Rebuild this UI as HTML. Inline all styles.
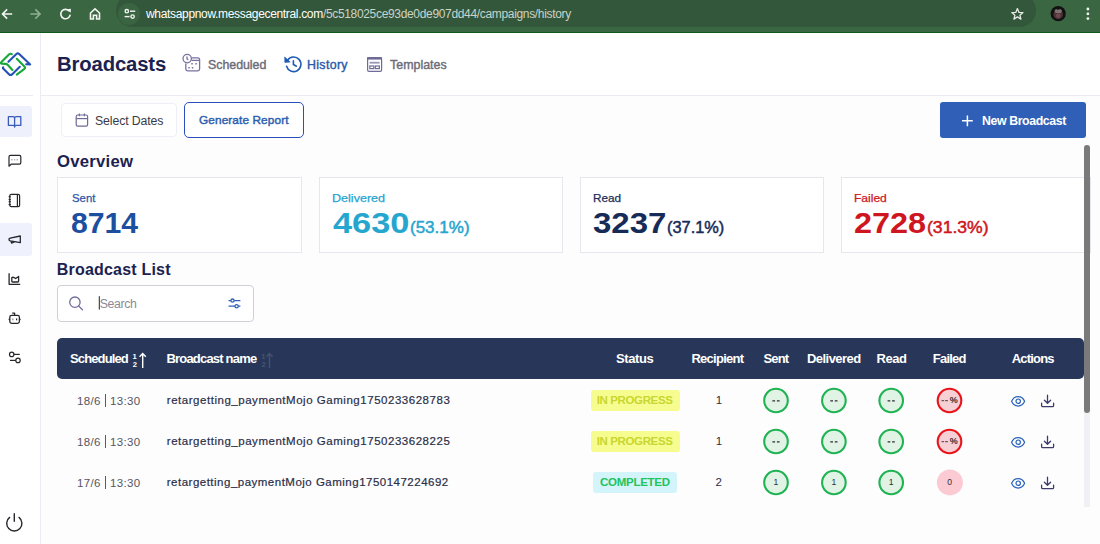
<!DOCTYPE html>
<html><head><meta charset="utf-8">
<style>
*{box-sizing:border-box;margin:0;padding:0}
html,body{width:1100px;height:544px;overflow:hidden;background:#fdfdfe;font-family:"Liberation Sans",sans-serif}
.abs{position:absolute}
svg{position:absolute;overflow:visible}
#bar{position:absolute;left:0;top:0;width:1100px;height:33px;background:#3b6642;border-bottom:1px solid #0d5a1c}
#pill{position:absolute;left:116px;top:-6px;width:920px;height:33px;background:#33573a;border-radius:17px}
#url b{font-weight:normal;color:#fff}
#side{position:absolute;left:0;top:33px;width:41px;height:511px;border-right:1px solid #ecebf2;background:#fff}
#hdr{position:absolute;left:41px;top:33px;width:1059px;height:63px;border-bottom:1px solid #ecebf2;background:#fff}
.t{position:absolute;white-space:nowrap;line-height:1}
.card{position:absolute;top:177px;height:76px;border:1px solid #e6e6ec;background:#fff}
#thead{position:absolute;left:57px;top:338px;width:1027px;height:41px;background:#283759;border-radius:5px}
.badge{position:absolute;height:21px;border-radius:3px}
.circ{position:absolute;width:25.5px;height:25.5px;border-radius:50%;border:1.8px solid #1fb353;background:#e1f3e5;font-size:8px;text-align:center;line-height:21.9px;color:#333;font-weight:bold}
.circ.r{border-color:#e8141a;background:#f7d0d5}
.circ.nb{border-color:#f9cdd3;background:#f9cdd3}
.prog{background:#f6fd8e}
.done{background:#d3f4fb}
</style></head><body>
<div id="bar"><div id="pill"></div><div class="abs" style="left:118px;top:3px;width:22px;height:22px;border-radius:50%;background:#3a6442"></div></div>
<svg width="1100" height="33" style="left:0;top:0">
  <g fill="none" stroke="#f2f5f2" stroke-width="1.6" stroke-linecap="square">
    <path d="M2.8 14H11.4M6.6 9.9L2.5 14L6.6 18.1"/>
  </g>
  <g fill="none" stroke="#8daf93" stroke-width="1.6" stroke-linecap="square">
    <path d="M31.2 14H40M35.9 9.9L40 14L35.9 18.1"/>
  </g>
  <g fill="none" stroke="#f2f5f2" stroke-width="1.6">
    <path d="M69.4 11.4A4.7 4.7 0 1 0 70.2 14.6"/>
  </g>
  <path d="M67 9.2L70.9 8.8L70.7 12.7Z" fill="#f2f5f2"/>
  <g fill="none" stroke="#f2f5f2" stroke-width="1.6" stroke-linejoin="miter">
    <path d="M90.5 19V13L95 8.8L99.5 13V19H96.6V15.3H93.4V19Z"/>
  </g>
  <!-- tune -->
  <g fill="none" stroke="#f2f5f2" stroke-width="1.4">
    <circle cx="126.8" cy="11.2" r="1.7"/>
    <path d="M130 11.2H135.2"/>
    <circle cx="132.6" cy="16.6" r="1.7"/>
    <path d="M124.6 16.6H129.6"/>
  </g>
  <!-- star -->
  <path d="M1017.4 8.6L1019 12.4L1023 12.6L1019.9 15.2L1020.9 19.1L1017.4 16.9L1013.9 19.1L1014.9 15.2L1011.8 12.6L1015.8 12.4Z" fill="none" stroke="#e6ebe6" stroke-width="1.3" stroke-linejoin="round"/>
  <!-- avatar -->
  <circle cx="1058.2" cy="13.7" r="7.6" fill="#111"/>
  <circle cx="1058.2" cy="14.4" r="4.8" fill="#4a3438"/>
  <path d="M1054.5 10.5L1056 9L1058 10L1060.3 9L1062 10.5L1061 13L1055.5 13Z" fill="#7e7274"/>
  <circle cx="1058.2" cy="15.8" r="2.2" fill="#6e4a50"/>
  <!-- menu -->
  <g fill="#f4f6f4"><circle cx="1087.9" cy="9" r="1.4"/><circle cx="1087.9" cy="13.8" r="1.4"/><circle cx="1087.9" cy="18.6" r="1.4"/></g>
</svg>
<div id="side"></div>
<div class="abs" style="left:0;top:95px;width:33px;height:1px;background:#ecebf2"></div>
<div class="abs" style="left:0;top:106px;width:31.5px;height:31px;background:#eef1fc;border-radius:0 3px 3px 0"></div>
<div class="abs" style="left:0;top:223px;width:31.7px;height:32.5px;background:#eff2fd;border-radius:0 3px 3px 0"></div>
<svg width="41" height="544" style="left:0;top:0">
  <!-- logo -->
  <g fill="none" stroke-width="2.1" stroke-linecap="round" stroke-linejoin="round">
    <path d="M11.8 54.2Q10.4 53.2 9.2 54.3L1.2 62.3Q0.4 63.4 1.8 63.7L5.6 63.9Q6.8 64 7.6 64.8L12.4 70" stroke="#1aa83a"/>
    <path d="M8.4 61.8L16.4 54Q17.8 52.8 19.2 54L30.2 64.4L26.2 64.2" stroke="#2351b5"/>
    <path d="M16.8 58.8L24.4 66.4Q25.6 67.6 24.4 68.8L16.8 74.6" stroke="#1aa83a"/>
    <path d="M19.8 66.8L12 74.4Q10.6 75.6 9.2 74.4L3.2 68.6Q2.6 67.8 3.2 67.4" stroke="#2351b5"/>
  </g>
  <!-- book -->
  <g fill="none" stroke="#3a5bb8" stroke-width="1.3" stroke-linejoin="round">
    <path d="M8.4 116.6H12.8Q14.6 116.6 14.6 118.2Q14.6 116.6 16.4 116.6H20.8V125.4H15.8Q14.6 125.4 14.6 127Q14.6 125.4 13.4 125.4H8.4Z"/>
    <path d="M14.6 118.2V126.6"/>
  </g>
  <!-- chat -->
  <g fill="none" stroke="#26262c" stroke-width="1.2" stroke-linejoin="round">
    <path d="M9 166.2V156.8Q9 155.4 10.4 155.4H19.4Q20.8 155.4 20.8 156.8V162.8Q20.8 164.2 19.4 164.2H11.2Z"/>
  </g>
  <g fill="#9a9aa2"><rect x="11.2" y="159.2" width="1.3" height="1.2"/><rect x="13.9" y="159.2" width="1.3" height="1.2"/><rect x="16.6" y="159.2" width="1.3" height="1.2"/></g>
  <!-- notebook -->
  <g fill="none" stroke="#26262c" stroke-width="1.2">
    <rect x="9.8" y="194.4" width="9.8" height="12.2" rx="1.4"/>
    <path d="M17.4 194.4V206.6"/>
  </g>
  <g fill="#26262c"><rect x="8.6" y="196.2" width="2.2" height="1.1"/><rect x="8.6" y="199" width="2.2" height="1.1"/><rect x="8.6" y="201.2" width="2.2" height="1.1"/><rect x="8.6" y="204" width="2.2" height="1.1"/></g>
  <!-- megaphone -->
  <g fill="none" stroke="#26262c" stroke-width="1.3" stroke-linejoin="round">
    <path d="M9 238.8Q8.6 240.4 10.2 240.9L20.3 242.6V236L10.2 238.2Z"/>
    <path d="M11 241.2L11.6 243.1L14.4 242"/>
  </g>
  <!-- chart -->
  <g fill="none" stroke="#26262c" stroke-width="1.3" stroke-linejoin="round">
    <path d="M9.1 273.3V284.3H20.2"/>
    <path d="M11.8 277.6Q13.5 276.6 15.6 278.6L18.6 276.4V281.2Q18.6 282 17.8 282H12.6Q11.8 282 11.8 281.2Z"/>
  </g>
  <!-- robot -->
  <g fill="none" stroke="#26262c" stroke-width="1.3" stroke-linejoin="round">
    <rect x="9.8" y="315.4" width="9.6" height="8" rx="1.8"/>
    <path d="M12.2 313.1H14.6V315.4"/>
    <path d="M8.6 319.4H9.8M19.4 319.4H20.6"/>
  </g>
  <g fill="#26262c"><rect x="12.2" y="318.5" width="1.2" height="1.8" fill="#8a8a90"/><rect x="16" y="318.5" width="1.2" height="1.8"/></g>
  <!-- tune -->
  <g fill="none" stroke="#26262c" stroke-width="1.2">
    <circle cx="11.7" cy="354.4" r="2.2"/>
    <path d="M13.9 354.4H19.8"/>
    <circle cx="18" cy="360.4" r="2.2"/>
    <path d="M10 360.4H15.8"/>
  </g>
  <!-- power -->
  <g fill="none" stroke="#26262c" stroke-width="1.4" stroke-linecap="round">
    <path d="M9.6 517.4A7.6 7.6 0 1 0 19 517.4"/>
    <path d="M14.3 513.8V521.2"/>
  </g>
</svg>
<div id="hdr"></div>
<svg width="1100" height="100" style="left:0;top:0">
  <!-- scheduled icon -->
  <g fill="none" stroke="#7a70a2" stroke-width="1.3">
    <path d="M192 57.8H197.8Q199.6 57.8 199.6 59.6V69Q199.6 70.8 197.8 70.8H187.6Q185.8 70.8 185.8 69V63.4"/>
    <path d="M191.6 60.4H199.6"/>
    <circle cx="187.2" cy="58.6" r="4.2"/>
    <path d="M187 56.4V58.8L188.2 60"/>
  </g>
  <g fill="#7a70a2"><rect x="191.3" y="63" width="1.5" height="1.5"/><rect x="195.3" y="63" width="1.5" height="1.5"/><rect x="188.3" y="67" width="1.5" height="1.5"/><rect x="191.8" y="67" width="1.5" height="1.5"/></g>
  <!-- history icon -->
  <g fill="none" stroke="#1f5bb5" stroke-width="1.6" stroke-linecap="round">
    <path d="M286.6 66.2A7.3 7.3 0 1 0 287.6 60.2"/>
    <path d="M293.4 60.9V64.5L296.4 66.2"/>
  </g>
  <path d="M284.7 56.9L284.8 62.4L290.2 62.1Z" fill="#1f5bb5" stroke="#1f5bb5" stroke-width="0.6" stroke-linejoin="round"/>
  <!-- templates -->
  <g fill="none" stroke="#6f6b98" stroke-width="1.2">
    <rect x="367.6" y="57.6" width="14" height="13.8" rx="1.4"/>
    <rect x="369.8" y="66" width="4" height="2.6"/>
    <rect x="375.4" y="66" width="4" height="2.6"/>
  </g>
  <rect x="367" y="57.2" width="15" height="2.4" fill="#6f6b98"/>
  <rect x="369.6" y="61.8" width="10" height="1.8" fill="#9a98b8"/>
</svg>
<div class="abs" style="left:60.5px;top:102.8px;width:116px;height:34.5px;border:1px solid #f0eff5;border-radius:4px;background:#fff"></div>
<div class="abs" style="left:184px;top:102.4px;width:120px;height:35.2px;border:1.5px solid #2a4fbd;border-radius:5px;background:#fff"></div>
<div class="abs" style="left:940px;top:102.4px;width:146px;height:35.5px;background:#2f5fb7;border-radius:3px"></div>
<div class="abs" style="left:57px;top:284.5px;width:196.5px;height:37px;border:1px solid #cfcfd8;border-radius:4px;background:#fff"></div>
<svg width="100" height="140" style="left:0;top:0">
  <g fill="none" stroke="#6e6a98" stroke-width="1.2">
    <rect x="76.2" y="115" width="11.4" height="11.2" rx="1.6"/>
    <path d="M76.2 118.6H87.6"/>
    <path d="M79.3 113.4V116.2M84.4 113.4V116.2"/>
  </g>
</svg>
<svg width="1100" height="140" style="left:0;top:0"><path d="M967.4 115.4V126.2M962 120.8H972.8" stroke="#fff" stroke-width="1.5"/></svg>
<svg width="300" height="330" style="left:0;top:0">
  <g fill="none" stroke="#6f6d99" stroke-width="1.3" stroke-linecap="round">
    <circle cx="74.9" cy="302.2" r="5.2"/>
    <path d="M78.6 305.9L82.4 309.7"/>
  </g>
  <g fill="none" stroke="#2d62b5" stroke-width="1.3">
    <path d="M228.5 300.6H230.9M234.1 300.6H240.4M228.5 306.2H235M238.2 306.2H240.4"/>
    <circle cx="232.5" cy="300.6" r="1.6"/>
    <circle cx="236.6" cy="306.2" r="1.6"/>
  </g>
  <path d="M99.3 296.2V309.6" stroke="#222" stroke-width="1"/>
</svg>
<div class="card" style="left:57px;width:245px"></div>
<div class="card" style="left:318.5px;width:244.5px"></div>
<div class="card" style="left:579.5px;width:244.5px"></div>
<div class="card" style="left:840.5px;width:250px"></div>
<div id="thead"></div>
<div class="badge prog" style="left:590.7px;top:390.2px;width:89px"></div>
<svg width="1100" height="544" style="left:0;top:0"><g font-family="Liberation Sans" font-size="8.6px" fill="#2e2e34" text-anchor="middle"><circle cx="776" cy="400.5" r="11.8" fill="#e1f3e5" stroke="#1fb353" stroke-width="2.1"/><path d="M772.4 400.9H775.1M776.9 400.9H779.6" stroke="#2e2e34" stroke-width="1.2"/><circle cx="833.9" cy="400.5" r="11.8" fill="#e1f3e5" stroke="#1fb353" stroke-width="2.1"/><path d="M830.3 400.9H833.0M834.8 400.9H837.5" stroke="#2e2e34" stroke-width="1.2"/><circle cx="891.2" cy="400.5" r="11.8" fill="#e1f3e5" stroke="#1fb353" stroke-width="2.1"/><path d="M887.6 400.9H890.3000000000001M892.1 400.9H894.8000000000001" stroke="#2e2e34" stroke-width="1.2"/><circle cx="949.5" cy="400.5" r="11.8" fill="#f7d0d5" stroke="#e8141a" stroke-width="2.1"/><path d="M941.5 400.7H944.1M945.1 400.7H947.9" stroke="#4a3a3e" stroke-width="1"/><text x="953.8" y="403.4" font-size="9px" font-weight="bold" fill="#3a2a2e">%</text></g></svg>
<div class="abs" style="left:104.7px;top:394.2px;width:1px;height:12.6px;background:#5a5a66"></div>
<svg width="30" height="20" style="left:1008px;top:390.5px"><g fill="none" stroke="#2962b8" stroke-width="1.2"><path d="M3.6 10.3C6.2 4 14 4 16.6 10.3C14 16.6 6.2 16.6 3.6 10.3Z"/><circle cx="10.2" cy="10.2" r="2.2"/></g></svg>
<svg width="20" height="20" style="left:1037px;top:390.5px"><g fill="none" stroke="#3d3b6b" stroke-width="1.3" stroke-linecap="round" stroke-linejoin="round"><path d="M10.5 4.2V12.2M7.4 9.2L10.5 12.3L13.6 9.2"/><path d="M4.6 12.2V14.4Q4.6 15.6 5.8 15.6H15.4Q16.6 15.6 16.6 14.4V12.2"/></g></svg>
<div class="badge prog" style="left:590.7px;top:431.2px;width:89px"></div>
<svg width="1100" height="544" style="left:0;top:0"><g font-family="Liberation Sans" font-size="8.6px" fill="#2e2e34" text-anchor="middle"><circle cx="776" cy="441.5" r="11.8" fill="#e1f3e5" stroke="#1fb353" stroke-width="2.1"/><path d="M772.4 441.9H775.1M776.9 441.9H779.6" stroke="#2e2e34" stroke-width="1.2"/><circle cx="833.9" cy="441.5" r="11.8" fill="#e1f3e5" stroke="#1fb353" stroke-width="2.1"/><path d="M830.3 441.9H833.0M834.8 441.9H837.5" stroke="#2e2e34" stroke-width="1.2"/><circle cx="891.2" cy="441.5" r="11.8" fill="#e1f3e5" stroke="#1fb353" stroke-width="2.1"/><path d="M887.6 441.9H890.3000000000001M892.1 441.9H894.8000000000001" stroke="#2e2e34" stroke-width="1.2"/><circle cx="949.5" cy="441.5" r="11.8" fill="#f7d0d5" stroke="#e8141a" stroke-width="2.1"/><path d="M941.5 441.7H944.1M945.1 441.7H947.9" stroke="#4a3a3e" stroke-width="1"/><text x="953.8" y="444.4" font-size="9px" font-weight="bold" fill="#3a2a2e">%</text></g></svg>
<div class="abs" style="left:104.7px;top:435.2px;width:1px;height:12.6px;background:#5a5a66"></div>
<svg width="30" height="20" style="left:1008px;top:431.5px"><g fill="none" stroke="#2962b8" stroke-width="1.2"><path d="M3.6 10.3C6.2 4 14 4 16.6 10.3C14 16.6 6.2 16.6 3.6 10.3Z"/><circle cx="10.2" cy="10.2" r="2.2"/></g></svg>
<svg width="20" height="20" style="left:1037px;top:431.5px"><g fill="none" stroke="#3d3b6b" stroke-width="1.3" stroke-linecap="round" stroke-linejoin="round"><path d="M10.5 4.2V12.2M7.4 9.2L10.5 12.3L13.6 9.2"/><path d="M4.6 12.2V14.4Q4.6 15.6 5.8 15.6H15.4Q16.6 15.6 16.6 14.4V12.2"/></g></svg>
<div class="badge done" style="left:593.2px;top:472.0px;width:84px"></div>
<svg width="1100" height="544" style="left:0;top:0"><g font-family="Liberation Sans" font-size="8.6px" fill="#2e2e34" text-anchor="middle"><circle cx="776" cy="482.5" r="11.8" fill="#e1f3e5" stroke="#1fb353" stroke-width="2.1"/><text x="775.9" y="484.9">1</text><circle cx="833.9" cy="482.5" r="11.8" fill="#e1f3e5" stroke="#1fb353" stroke-width="2.1"/><text x="833.8" y="484.9">1</text><circle cx="891.2" cy="482.5" r="11.8" fill="#e1f3e5" stroke="#1fb353" stroke-width="2.1"/><text x="891.1" y="484.9">1</text><circle cx="949.9" cy="482.4" r="13" fill="#fbcad3"/><text x="949.6" y="484.9">0</text></g></svg>
<div class="abs" style="left:104.7px;top:476.2px;width:1px;height:12.6px;background:#5a5a66"></div>
<svg width="30" height="20" style="left:1008px;top:472.5px"><g fill="none" stroke="#2962b8" stroke-width="1.2"><path d="M3.6 10.3C6.2 4 14 4 16.6 10.3C14 16.6 6.2 16.6 3.6 10.3Z"/><circle cx="10.2" cy="10.2" r="2.2"/></g></svg>
<svg width="20" height="20" style="left:1037px;top:472.5px"><g fill="none" stroke="#3d3b6b" stroke-width="1.3" stroke-linecap="round" stroke-linejoin="round"><path d="M10.5 4.2V12.2M7.4 9.2L10.5 12.3L13.6 9.2"/><path d="M4.6 12.2V14.4Q4.6 15.6 5.8 15.6H15.4Q16.6 15.6 16.6 14.4V12.2"/></g></svg>
<div class="t" id="url" style="left:146.00px;top:7.50px;font-size:12px;font-weight:400;color:#c9d3ca;letter-spacing:-0.330px;"><b>whatsappnow.messagecentral.com</b>/5c518025ce93de0de907dd44/campaigns/history</div>
<div class="t" id="h_title" style="left:57.00px;top:54.01px;font-size:20.3px;font-weight:700;color:#1b2250;letter-spacing:-0.133px;">Broadcasts</div>
<div class="t" id="tab1" style="left:208.00px;top:58.50px;font-size:12.4px;font-weight:400;color:#6d6c78;letter-spacing:-0.025px;-webkit-text-stroke:0.4px #6d6c78;">Scheduled</div>
<div class="t" id="tab2" style="left:307.00px;top:58.50px;font-size:12.4px;font-weight:400;color:#2a5aa8;letter-spacing:0.333px;-webkit-text-stroke:0.4px #2a5aa8;">History</div>
<div class="t" id="tab3" style="left:390.00px;top:58.50px;font-size:12.4px;font-weight:400;color:#6d6c78;letter-spacing:0.025px;-webkit-text-stroke:0.4px #6d6c78;">Templates</div>
<div class="t" id="b_sel" style="left:95.00px;top:114.79px;font-size:12.3px;font-weight:400;color:#3a3a44;letter-spacing:-0.118px;">Select Dates</div>
<div class="t" id="b_gen" style="left:199.00px;top:115.11px;font-size:11.8px;font-weight:400;color:#2d5fb0;letter-spacing:0.114px;-webkit-text-stroke:0.45px #2d5fb0;">Generate Report</div>
<div class="t" id="b_new" style="left:982.00px;top:114.59px;font-size:12.3px;font-weight:700;color:#ffffff;letter-spacing:-0.375px;">New Broadcast</div>
<div class="t" id="ov" style="left:57.00px;top:154.46px;font-size:16.7px;font-weight:700;color:#1b2250;letter-spacing:0.257px;">Overview</div>
<div class="t" id="c1l" style="left:72.00px;top:193.42px;font-size:11.2px;font-weight:400;color:#2a56a6;transform:scaleX(1.0145);transform-origin:0 0;-webkit-text-stroke:0.25px #2a56a6;">Sent</div>
<div class="t" id="c1n" style="left:71.40px;top:207.97px;font-size:29.8px;font-weight:700;color:#1c4fa0;transform:scaleX(1.0125);transform-origin:0 0;">8714</div>
<div class="t" id="c2l" style="left:331.50px;top:193.42px;font-size:11.2px;font-weight:400;color:#27a5cf;transform:scaleX(1.1221);transform-origin:0 0;-webkit-text-stroke:0.25px #27a5cf;">Delivered</div>
<div class="t" id="c2n" style="left:333.00px;top:207.97px;font-size:29.8px;font-weight:700;color:#26a6cf;transform:scaleX(1.1538);transform-origin:0 0;">4630</div>
<div class="t" id="c2p" style="left:409.50px;top:219.21px;font-size:17px;font-weight:400;color:#26a6cf;transform:scaleX(1.0003);transform-origin:0 0;-webkit-text-stroke:0.5px #26a6cf;">(53.1%)</div>
<div class="t" id="c3l" style="left:592.50px;top:193.42px;font-size:11.2px;font-weight:400;color:#1b2d5a;transform:scaleX(1.0500);transform-origin:0 0;-webkit-text-stroke:0.25px #1b2d5a;">Read</div>
<div class="t" id="c3n" style="left:593.00px;top:207.97px;font-size:29.8px;font-weight:700;color:#172b59;transform:scaleX(1.1079);transform-origin:0 0;">3237</div>
<div class="t" id="c3p" style="left:666.50px;top:219.21px;font-size:17px;font-weight:400;color:#172b59;transform:scaleX(0.9622);transform-origin:0 0;-webkit-text-stroke:0.5px #172b59;">(37.1%)</div>
<div class="t" id="c4l" style="left:853.50px;top:193.42px;font-size:11.2px;font-weight:400;color:#d0161f;transform:scaleX(1.0773);transform-origin:0 0;-webkit-text-stroke:0.25px #d0161f;">Failed</div>
<div class="t" id="c4n" style="left:854.40px;top:207.97px;font-size:29.8px;font-weight:700;color:#cf1620;transform:scaleX(1.0879);transform-origin:0 0;">2728</div>
<div class="t" id="c4p" style="left:927.00px;top:219.21px;font-size:17px;font-weight:400;color:#cf1620;transform:scaleX(1.0342);transform-origin:0 0;-webkit-text-stroke:0.5px #cf1620;">(31.3%)</div>
<div class="t" id="bl" style="left:56.80px;top:262.35px;font-size:16px;font-weight:700;color:#1b2250;letter-spacing:0.200px;">Broadcast List</div>
<div class="t" id="srch" style="left:99.80px;top:297.59px;font-size:12.3px;font-weight:400;color:#8a8a96;letter-spacing:-0.400px;">Search</div>
<div class="t" id="th1" style="left:70.00px;top:352.39px;font-size:13px;font-weight:700;color:#ffffff;letter-spacing:-0.875px;">Scheduled</div>
<div class="t" id="th2" style="left:166.40px;top:352.39px;font-size:13px;font-weight:700;color:#ffffff;letter-spacing:-0.800px;">Broadcast name</div>
<div class="t" id="th3" style="left:616.00px;top:352.39px;font-size:13px;font-weight:700;color:#ffffff;letter-spacing:-0.400px;">Status</div>
<div class="t" id="th4" style="left:691.40px;top:352.39px;font-size:13px;font-weight:700;color:#ffffff;letter-spacing:-0.725px;">Recipient</div>
<div class="t" id="th5" style="left:763.40px;top:352.39px;font-size:13px;font-weight:700;color:#ffffff;letter-spacing:-0.800px;">Sent</div>
<div class="t" id="th6" style="left:807.00px;top:352.39px;font-size:13px;font-weight:700;color:#ffffff;letter-spacing:-0.550px;">Delivered</div>
<div class="t" id="th7" style="left:876.50px;top:352.39px;font-size:13px;font-weight:700;color:#ffffff;letter-spacing:-0.467px;">Read</div>
<div class="t" id="th8" style="left:932.80px;top:352.39px;font-size:13px;font-weight:700;color:#ffffff;letter-spacing:-0.780px;">Failed</div>
<div class="t" id="th9" style="left:1011.70px;top:352.39px;font-size:13px;font-weight:700;color:#ffffff;letter-spacing:-0.800px;">Actions</div>
<div class="t" id="r0d" style="left:77.10px;top:396.06px;font-size:11.5px;font-weight:400;color:#55555f;letter-spacing:0.300px;">18/6</div>
<div class="t" id="r0t" style="left:110.10px;top:396.06px;font-size:11.5px;font-weight:400;color:#55555f;letter-spacing:0.325px;">13:30</div>
<div class="t" id="r0n" style="left:166.80px;top:395.46px;font-size:11.5px;font-weight:400;color:#2a2e48;letter-spacing:0.530px;-webkit-text-stroke:0.2px #2a2e48;">retargetting_paymentMojo Gaming1750233628783</div>
<div class="t" id="r0s" style="left:596.70px;top:395.26px;font-size:11.5px;font-weight:700;color:#c9d62f;letter-spacing:-0.370px;">IN PROGRESS</div>
<div class="t" id="r0r" style="left:715.80px;top:395.26px;font-size:11.5px;font-weight:400;color:#2a2e48;letter-spacing:-0.900px;">1</div>
<div class="t" id="r1d" style="left:77.10px;top:437.06px;font-size:11.5px;font-weight:400;color:#55555f;letter-spacing:0.300px;">18/6</div>
<div class="t" id="r1t" style="left:110.10px;top:437.06px;font-size:11.5px;font-weight:400;color:#55555f;letter-spacing:0.325px;">13:30</div>
<div class="t" id="r1n" style="left:166.80px;top:436.46px;font-size:11.5px;font-weight:400;color:#2a2e48;letter-spacing:0.530px;-webkit-text-stroke:0.2px #2a2e48;">retargetting_paymentMojo Gaming1750233628225</div>
<div class="t" id="r1s" style="left:596.70px;top:436.26px;font-size:11.5px;font-weight:700;color:#c9d62f;letter-spacing:-0.370px;">IN PROGRESS</div>
<div class="t" id="r1r" style="left:715.80px;top:436.26px;font-size:11.5px;font-weight:400;color:#2a2e48;letter-spacing:-0.900px;">1</div>
<div class="t" id="r2d" style="left:77.10px;top:478.06px;font-size:11.5px;font-weight:400;color:#55555f;letter-spacing:0.300px;">17/6</div>
<div class="t" id="r2t" style="left:110.10px;top:478.06px;font-size:11.5px;font-weight:400;color:#55555f;letter-spacing:0.325px;">13:30</div>
<div class="t" id="r2n" style="left:166.80px;top:477.46px;font-size:11.5px;font-weight:400;color:#2a2e48;letter-spacing:0.493px;-webkit-text-stroke:0.2px #2a2e48;">retargetting_paymentMojo Gaming1750147224692</div>
<div class="t" id="r2s" style="left:600.00px;top:477.26px;font-size:11.5px;font-weight:700;color:#22c25c;letter-spacing:-0.275px;">COMPLETED</div>
<div class="t" id="r2r" style="left:715.40px;top:477.26px;font-size:11.5px;font-weight:400;color:#2a2e48;letter-spacing:5.200px;">2</div>
<div class="abs" style="left:1084px;top:145px;width:5.6px;height:362px;background:#f1f0f4"></div>
<div class="abs" style="left:1084px;top:145px;width:5.6px;height:268px;background:#7a7a7a;border-radius:3px"></div>
<svg width="1100" height="544" style="left:0;top:0">
<g fill="#fff" font-family="Liberation Sans" font-weight="bold" font-size="7.6px">
<text x="132.6" y="359.3">1</text><text x="132.8" y="367.4">2</text>
</g>
<path d="M142.7 353.6V368M139.6 356.8L142.7 353.6L145.8 356.8" fill="none" stroke="#fff" stroke-width="1.4"/>
<g opacity="0.13">
<g fill="#fff" font-family="Liberation Sans" font-weight="bold" font-size="7.6px">
<text x="261.2" y="359.3">1</text><text x="261.4" y="367.4">2</text>
</g>
<path d="M269.5 353.6V368M266.4 356.8L269.5 353.6L272.6 356.8" fill="none" stroke="#fff" stroke-width="1.4"/>
</g>
</svg>
</body></html>
